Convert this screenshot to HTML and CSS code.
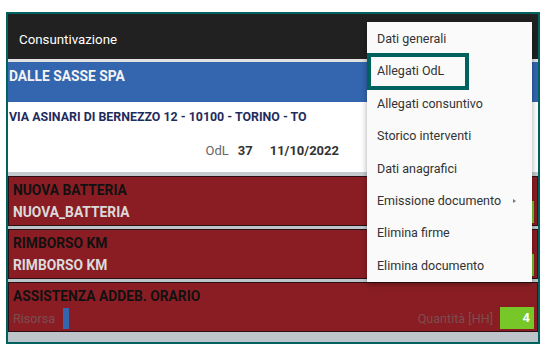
FILE: index.html
```html
<!DOCTYPE html>
<html lang="it">
    <head>
        <title>Consuntivazione</title>
        <meta charset="utf-8" />
        <meta name="viewport" content="width=device-width, initial-scale=1.0" />
        <link rel="stylesheet" href="styles.css">
    </head>
    <body>
        <div class="frame">
            <div class="topbar">Consuntivazione</div>
            <div class="client">
                <div class="client-name">DALLE SASSE SPA</div>
            </div>
            <div class="address">
                <div class="street">VIA ASINARI DI BERNEZZO 12 - 10100 - TORINO - TO</div>
                <div class="odl">
                    <span class="odl-label">OdL</span>
                    <span class="odl-num">37</span>
                    <span class="odl-date">11/10/2022</span>
                </div>
            </div>
            <div class="cards">
                <div class="card">
                    <div class="card-title">NUOVA BATTERIA</div>
                    <div class="card-row">
                        <span class="card-code">NUOVA_BATTERIA</span>
                        <span class="qty"></span>
                    </div>
                </div>
                <div class="card">
                    <div class="card-title">RIMBORSO KM</div>
                    <div class="card-row">
                        <span class="card-code">RIMBORSO KM</span>
                        <span class="qty"></span>
                    </div>
                </div>
                <div class="card">
                    <div class="card-title">ASSISTENZA ADDEB. ORARIO</div>
                    <div class="card-row">
                        <span class="dim">Risorsa</span>
                        <span class="resource"></span>
                        <span class="dim push">Quantità [HH]</span>
                        <span class="qty">4</span>
                    </div>
                </div>
            </div>
            <ul class="menu">
                <li>Dati generali</li>
                <li class="selected">Allegati OdL</li>
                <li>Allegati consuntivo</li>
                <li>Storico interventi</li>
                <li>Dati anagrafici</li>
                <li class="sub">Emissione documento</li>
                <li>Elimina firme</li>
                <li>Elimina documento</li>
            </ul>
        </div>
    </body>
</html>
```

FILE: styles.css
```css
html, body {
    margin: 0px;
    padding: 0px;
    background: white;
    font-family: Roboto, "Noto Sans", sans-serif;
}
.frame {
    position: relative;
    margin: 12px 0px 0px 6px;
    width: 530px;
    height: 328px;
    border: 2px solid #00625E;
    background: #BDC5CA;
    overflow: hidden;
}
.topbar {
    height: 39px;
    padding: 6px 0px 0px 11px;
    background: #212121;
    color: white;
    font-size: 13.3px;
    line-height: 39px;
    border-bottom: 3px solid #E2E2E2;
}
.client {
    height: 40px;
    background: #3465AF;
}
.client-name {
    padding: 5px 0px 0px 1px;
    line-height: 19px;
    color: #F4F4F4;
    font-size: 13.8px;
    font-weight: bold;
}
.address {
    height: 70px;
    background: white;
    border-bottom: 4px solid #C4CACE;
}
.street {
    padding: 8px 0px 0px 1px;
    line-height: 14px;
    color: #1F2B5C;
    font-size: 12.4px;
    font-weight: bold;
}
.odl {
    display: flex;
    justify-content: flex-end;
    gap: 9px;
    padding: 20px 199px 0px 0px;
    line-height: 14px;
    font-size: 13px;
}
.odl-label {
    color: #666;
}
.odl-num, .odl-date {
    color: #333;
    font-weight: bold;
}
.odl-date {
    margin-left: 8px;
}
.cards {
    display: flex;
    flex-direction: column;
    gap: 3px;
}
.card {
    height: 48px;
    padding: 0px 0px 0px 4px;
    background: #8A1D24;
    border: 1px solid #2A1012;
    border-right-color: #3A1215;
}
.card-title {
    padding-top: 4px;
    line-height: 18px;
    color: #111;
    font-size: 13.8px;
    font-weight: bold;
}
.card-row {
    display: flex;
    align-items: center;
    height: 26px;
    font-size: 13.8px;
}
.card-code {
    color: #DADADA;
    font-weight: bold;
}
.dim {
    color: #7A4D51;
    font-size: 12.6px;
}
.resource {
    width: 6px;
    height: 21px;
    margin-left: 8px;
    background: #3465AF;
}
.push {
    margin-left: auto;
    margin-right: 7px;
}
.qty {
    margin-left: auto;
    width: 34px;
    height: 22px;
    margin-right: 3px;
    padding-right: 4px;
    box-sizing: border-box;
    background: #76C727;
    color: white;
    font-weight: bold;
    font-size: 13px;
    line-height: 22px;
    text-align: right;
}
.push + .qty {
    margin-left: 0px;
}
.menu {
    position: absolute;
    top: 8px;
    left: 359px;
    width: 165px;
    margin: 0px;
    padding: 1px 0px 0px;
    list-style: none;
    background: #FAFAFA;
    box-shadow: 0px 2px 6px rgba(0, 0, 0, 0.35);
}
.menu li {
    position: relative;
    height: 32.4px;
    padding-left: 10px;
    line-height: 32.4px;
    color: #333;
    font-size: 12.5px;
}
.selected::after {
    content: "";
    position: absolute;
    top: -2px;
    left: 0px;
    width: 102px;
    height: 37px;
    box-sizing: border-box;
    border: 4px solid #00625E;
}
.sub::after {
    content: "";
    position: absolute;
    top: 14px;
    left: 146px;
    border-left: 3px solid #777;
    border-top: 2.5px solid transparent;
    border-bottom: 2.5px solid transparent;
}
```
